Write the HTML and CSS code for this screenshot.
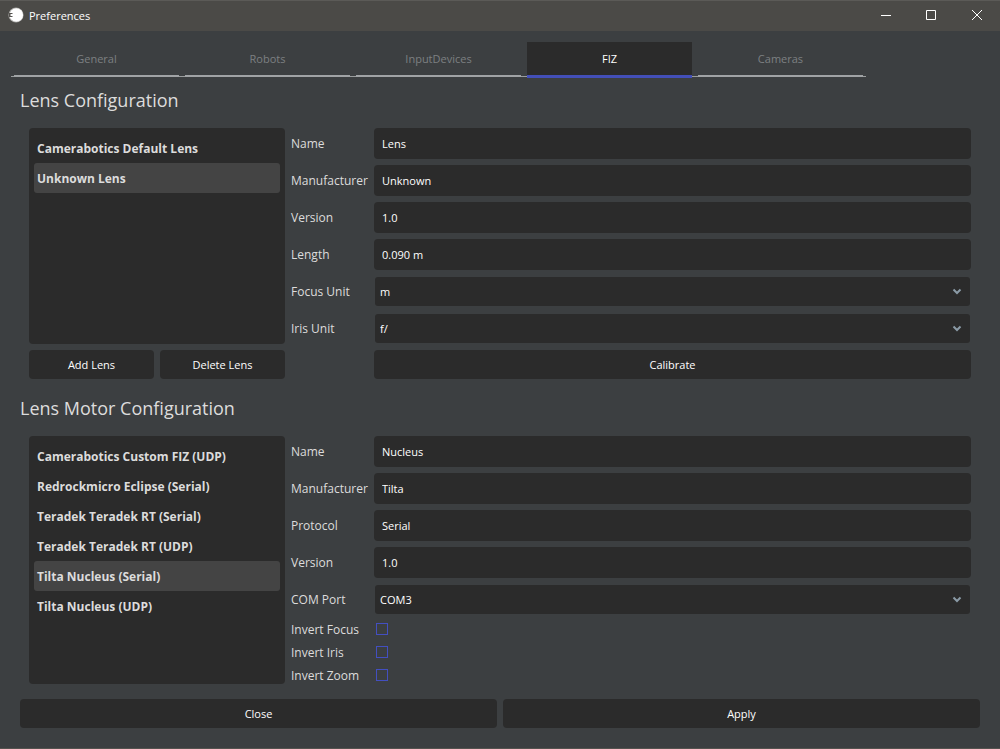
FILE: index.html
```html
<!DOCTYPE html>
<html lang="en">
<head>
<meta charset="utf-8">
<title>Preferences</title>
<link rel="stylesheet" href="styles.css">
</head>
<body>
<div class="window">
  <header class="titlebar">
    <svg class="logo" width="16" height="16" viewBox="0 0 16 16" aria-hidden="true">
      <circle cx="8" cy="8" r="7.6" fill="#a9a8a6"/>
      <circle cx="8.3" cy="8" r="6.8" fill="#fff"/>
      <path d="M1 6h3.500v1H2.500v2h2v1H1z" fill="#55534f"/>
    </svg>
    <span class="title">Preferences</span>
    <div class="controls">
      <button type="button" class="control" aria-label="Minimize"><svg width="12" height="12" viewBox="0 0 12 12"><path d="M2 6.5h10" /></svg></button>
      <button type="button" class="control" aria-label="Maximize"><svg width="12" height="12" viewBox="0 0 12 12"><path d="M1.5 1.5h9v9h-9z"/></svg></button>
      <button type="button" class="control" aria-label="Close window"><svg width="12" height="12" viewBox="0 0 12 12"><path d="M1 1l10 10M11 1L1 11"/></svg></button>
    </div>
  </header>

  <nav class="tabs" role="tablist">
    <button type="button" class="tab" role="tab">General</button>
    <button type="button" class="tab" role="tab">Robots</button>
    <button type="button" class="tab" role="tab">InputDevices</button>
    <button type="button" class="tab active" role="tab" aria-selected="true">FIZ</button>
    <button type="button" class="tab" role="tab">Cameras</button>
  </nav>

  <main class="content">
    <h2 class="heading">Lens Configuration</h2>
    <section class="group">
      <div class="side">
        <ul class="list">
          <li class="item">Camerabotics Default Lens</li>
          <li class="item selected">Unknown Lens</li>
        </ul>
        <div class="buttons">
          <button type="button" class="button">Add Lens</button>
          <button type="button" class="button">Delete Lens</button>
        </div>
      </div>
      <div class="fields">
        <div class="row"><label for="lens-name">Name</label><input class="field" id="lens-name" type="text" value="Lens"></div>
        <div class="row"><label for="lens-maker">Manufacturer</label><input class="field" id="lens-maker" type="text" value="Unknown"></div>
        <div class="row"><label for="lens-version">Version</label><input class="field" id="lens-version" type="text" value="1.0"></div>
        <div class="row"><label for="lens-length">Length</label><input class="field" id="lens-length" type="text" value="0.090 m"></div>
        <div class="row"><label for="focus-unit">Focus Unit</label>
          <div class="select"><select id="focus-unit"><option>m</option></select><svg class="chevron" width="10" height="7" viewBox="0 0 10 7"><path d="M1.5 1.5L5 5l3.5-3.5"/></svg></div></div>
        <div class="row"><label for="iris-unit">Iris Unit</label>
          <div class="select"><select id="iris-unit"><option>f/</option></select><svg class="chevron" width="10" height="7" viewBox="0 0 10 7"><path d="M1.5 1.5L5 5l3.5-3.5"/></svg></div></div>
        <div class="row"><span></span><button type="button" class="button">Calibrate</button></div>
      </div>
    </section>

    <h2 class="heading">Lens Motor Configuration</h2>
    <section class="group">
      <div class="side">
        <ul class="list">
          <li class="item">Camerabotics Custom FIZ (UDP)</li>
          <li class="item">Redrockmicro Eclipse (Serial)</li>
          <li class="item">Teradek Teradek RT (Serial)</li>
          <li class="item">Teradek Teradek RT (UDP)</li>
          <li class="item selected">Tilta Nucleus (Serial)</li>
          <li class="item">Tilta Nucleus (UDP)</li>
        </ul>
      </div>
      <div class="fields">
        <div class="row"><label for="motor-name">Name</label><input class="field" id="motor-name" type="text" value="Nucleus"></div>
        <div class="row"><label for="motor-maker">Manufacturer</label><input class="field" id="motor-maker" type="text" value="Tilta"></div>
        <div class="row"><label for="motor-protocol">Protocol</label><input class="field" id="motor-protocol" type="text" value="Serial"></div>
        <div class="row"><label for="motor-version">Version</label><input class="field" id="motor-version" type="text" value="1.0"></div>
        <div class="row"><label for="com-port">COM Port</label>
          <div class="select"><select id="com-port"><option>COM3</option></select><svg class="chevron" width="10" height="7" viewBox="0 0 10 7"><path d="M1.5 1.5L5 5l3.5-3.5"/></svg></div></div>
        <div class="row"><label for="invert-focus">Invert Focus</label><input class="check" id="invert-focus" type="checkbox"></div>
        <div class="row"><label for="invert-iris">Invert Iris</label><input class="check" id="invert-iris" type="checkbox"></div>
        <div class="row"><label for="invert-zoom">Invert Zoom</label><input class="check" id="invert-zoom" type="checkbox"></div>
      </div>
    </section>
  </main>

  <footer class="footer">
    <button type="button" class="button">Close</button>
    <button type="button" class="button">Apply</button>
  </footer>
</div>
</body>
</html>
```
FILE: styles.css
```css
* { box-sizing: border-box; }

body {
  margin: 0;
  background: #3c3f41;
  color: #dcdcdc;
  font: 12px/17px "Open Sans", "Noto Sans", sans-serif;
}

button, input, select {
  font: inherit;
  font-size: 11px;
  color: #fff;
  border: 0;
  margin: 0;
}

.window {
  min-height: 100vh;
  display: flex;
  flex-direction: column;
  border-bottom: 1px solid #55534f;
}

.titlebar {
  display: flex;
  align-items: center;
  height: 31px;
  padding: 0 0 2px 8px;
  gap: 5px;
  background: #4b4a47;
  border-top: 1px solid #5b5a57;
}

.title { color: #fff; font-size: 11px; }

.controls { display: flex; margin-left: auto; align-self: stretch; }

.control {
  width: 46px;
  padding: 0;
  display: flex;
  align-items: center;
  justify-content: center;
  background: none;
}

.control svg { fill: none; stroke: #fff; stroke-width: 1; }

.tabs {
  display: flex;
  gap: 6px;
  height: 35px;
  margin: 11px 134px 0 11px;
  padding: 0 3px;
  background: linear-gradient(#9a9d9e, #9a9d9e) bottom / 100% 1px no-repeat;
}

.tab {
  flex: 1;
  height: 35px;
  padding: 0;
  background: #3c3f41;
  color: #7d8082;
  border-bottom: 2px solid #a0a3a5;
}

.tab.active {
  height: 36px;
  background: #2b2b2b;
  color: #fff;
  border-bottom: 3px solid #434fb8;
}

.content { padding: 0 29px 0 20px; }

.heading {
  margin: 0;
  padding: 10px 0 15px;
  font-size: 18px;
  font-weight: 400;
  line-height: 26px;
}

.group + .heading { padding-top: 16px; }

.group { display: flex; gap: 6px; padding-left: 9px; }

.side { flex: 0 0 256px; display: flex; flex-direction: column; gap: 6px; }

.list {
  flex: 1;
  margin: 0;
  padding: 5px;
  list-style: none;
  background: #2b2b2b;
  border-radius: 4px;
}

.item {
  padding: 2px 3px 0;
  font-weight: 700;
  line-height: 28px;
  border-radius: 3px;
}

.selected { background: #444; }

.buttons, .footer { display: flex; gap: 6px; }

.button {
  flex: 1;
  height: 29px;
  padding: 0 8px;
  background: #2b2b2b;
  border-radius: 4px;
}

.fields { flex: 1; display: flex; flex-direction: column; gap: 6px; }

.row {
  display: grid;
  grid-template-columns: 77px 1fr;
  gap: 6px;
  align-items: center;
}

.field {
  width: 100%;
  height: 31px;
  padding: 0 8px;
  background: #2b2b2b;
  border-radius: 4px;
}

.select {
  display: flex;
  position: relative;
  padding: 1px;
}

.select select {
  appearance: none;
  width: 100%;
  height: 29px;
  padding: 0 5px;
  background: #2b2b2b;
  border-radius: 3px;
}

.chevron {
  position: absolute;
  right: 9px;
  top: 12px;
  fill: none;
  stroke: #8a9aa6;
  stroke-width: 2;
  pointer-events: none;
}

.check {
  appearance: none;
  align-self: start;
  width: 12px;
  height: 12px;
  margin: 2px 0 0 2px;
  border: 1px solid #434fc0;
}

.footer { padding: 15px 20px 20px; }
```
